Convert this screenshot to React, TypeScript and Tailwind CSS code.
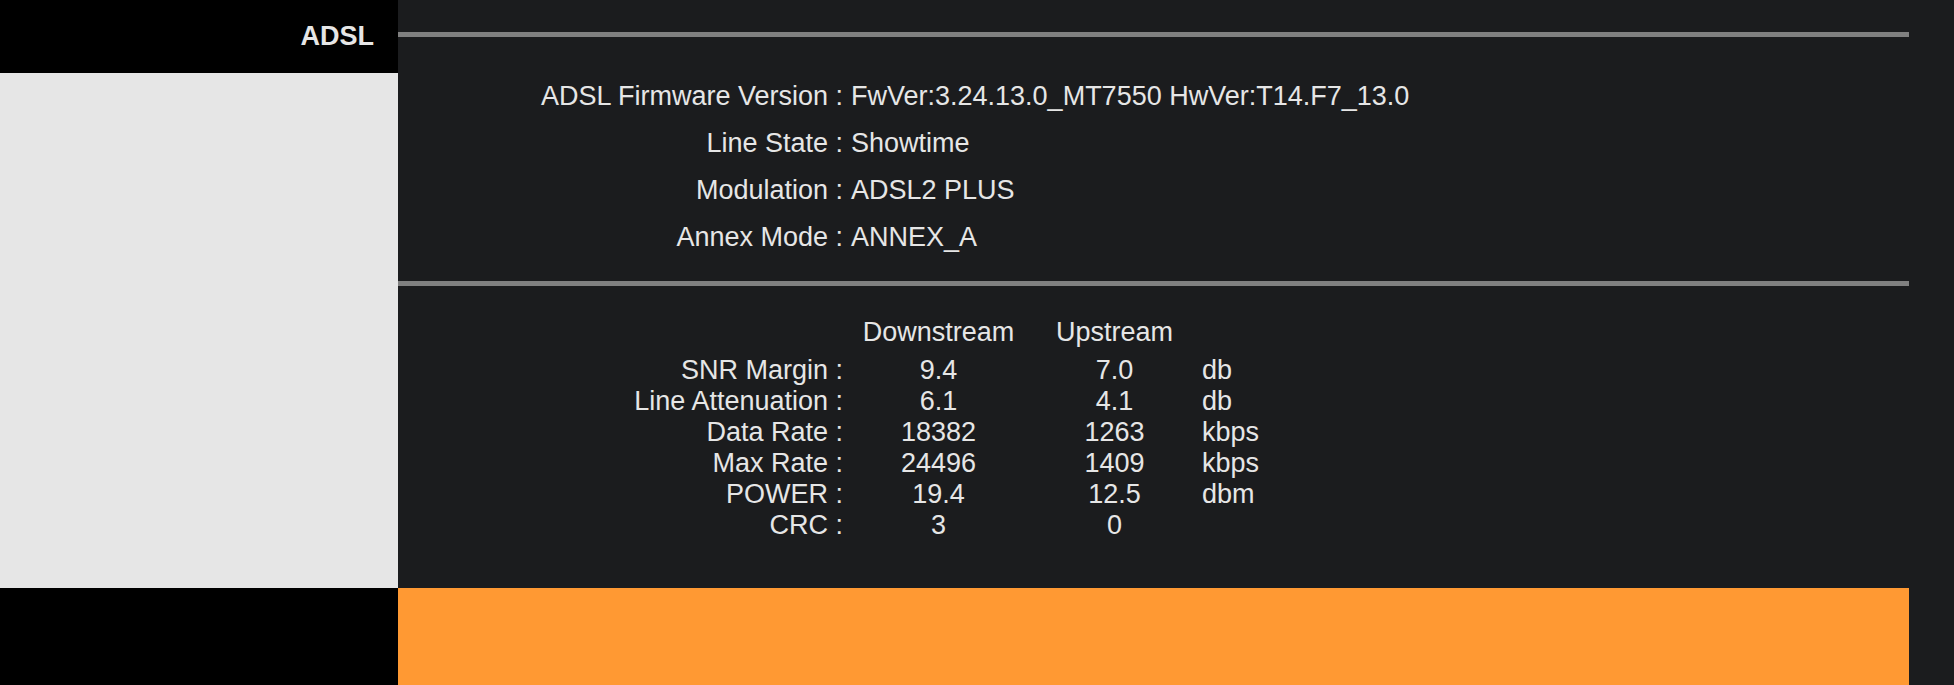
import React from 'react';

const lineInfo = [
  { label: 'ADSL Firmware Version :', value: 'FwVer:3.24.13.0_MT7550 HwVer:T14.F7_13.0' },
  { label: 'Line State :', value: 'Showtime' },
  { label: 'Modulation :', value: 'ADSL2 PLUS' },
  { label: 'Annex Mode :', value: 'ANNEX_A' },
];

const stats = [
  { label: 'SNR Margin :', down: '9.4', up: '7.0', unit: 'db' },
  { label: 'Line Attenuation :', down: '6.1', up: '4.1', unit: 'db' },
  { label: 'Data Rate :', down: '18382', up: '1263', unit: 'kbps' },
  { label: 'Max Rate :', down: '24496', up: '1409', unit: 'kbps' },
  { label: 'POWER :', down: '19.4', up: '12.5', unit: 'dbm' },
  { label: 'CRC :', down: '3', up: '0', unit: '' },
];

const Divider = () => <div className="h-[5px] w-full bg-[#808080]" />;

export default function App() {
  return (
    <div
      className="flex min-h-screen bg-[#1b1c1e] text-[27px] text-[#e6e6e6]"
      style={{ fontFamily: '"Liberation Sans", Arial, sans-serif' }}
    >
      <div className="flex w-[1909px] flex-col">
        <div className="flex h-[588px]">
          {/* Side menu */}
          <aside className="flex w-[398px] flex-col bg-[#e6e6e6]">
            <div className="flex h-[73px] justify-end bg-black pr-[24px] pt-[16px]">
              <span className="font-bold leading-normal text-[#e6e6e6]">ADSL</span>
            </div>
          </aside>

          {/* Status content */}
          <main className="flex flex-1 flex-col bg-[#1b1c1e] pt-[32px]">
            <Divider />

            <div className="flex flex-col pt-[36px] pb-[20px]">
              {lineInfo.map((row) => (
                <div key={row.label} className="grid h-[47px] grid-cols-[445px_1fr] items-center leading-normal">
                  <span className="text-right">{row.label}</span>
                  <span className="pl-[8px]">{row.value}</span>
                </div>
              ))}
            </div>

            <Divider />

            <div className="flex flex-col pt-[31px]">
              <div className="grid h-[38px] grid-cols-[445px_191px_161px_1fr] leading-[31px]">
                <span />
                <span className="text-center">Downstream</span>
                <span className="text-center">Upstream</span>
                <span />
              </div>
              {stats.map((s) => (
                <div key={s.label} className="grid h-[31px] grid-cols-[445px_191px_161px_1fr] leading-[31px]">
                  <span className="text-right">{s.label}</span>
                  <span className="text-center">{s.down}</span>
                  <span className="text-center">{s.up}</span>
                  <span className="pl-[7px]">{s.unit}</span>
                </div>
              ))}
            </div>
          </main>
        </div>

        {/* Footer */}
        <div className="flex h-[97px]">
          <div className="w-[398px] bg-black" />
          <div className="flex-1 bg-[#ff9933]" />
        </div>
      </div>
      <div className="flex-1" />
    </div>
  );
}
